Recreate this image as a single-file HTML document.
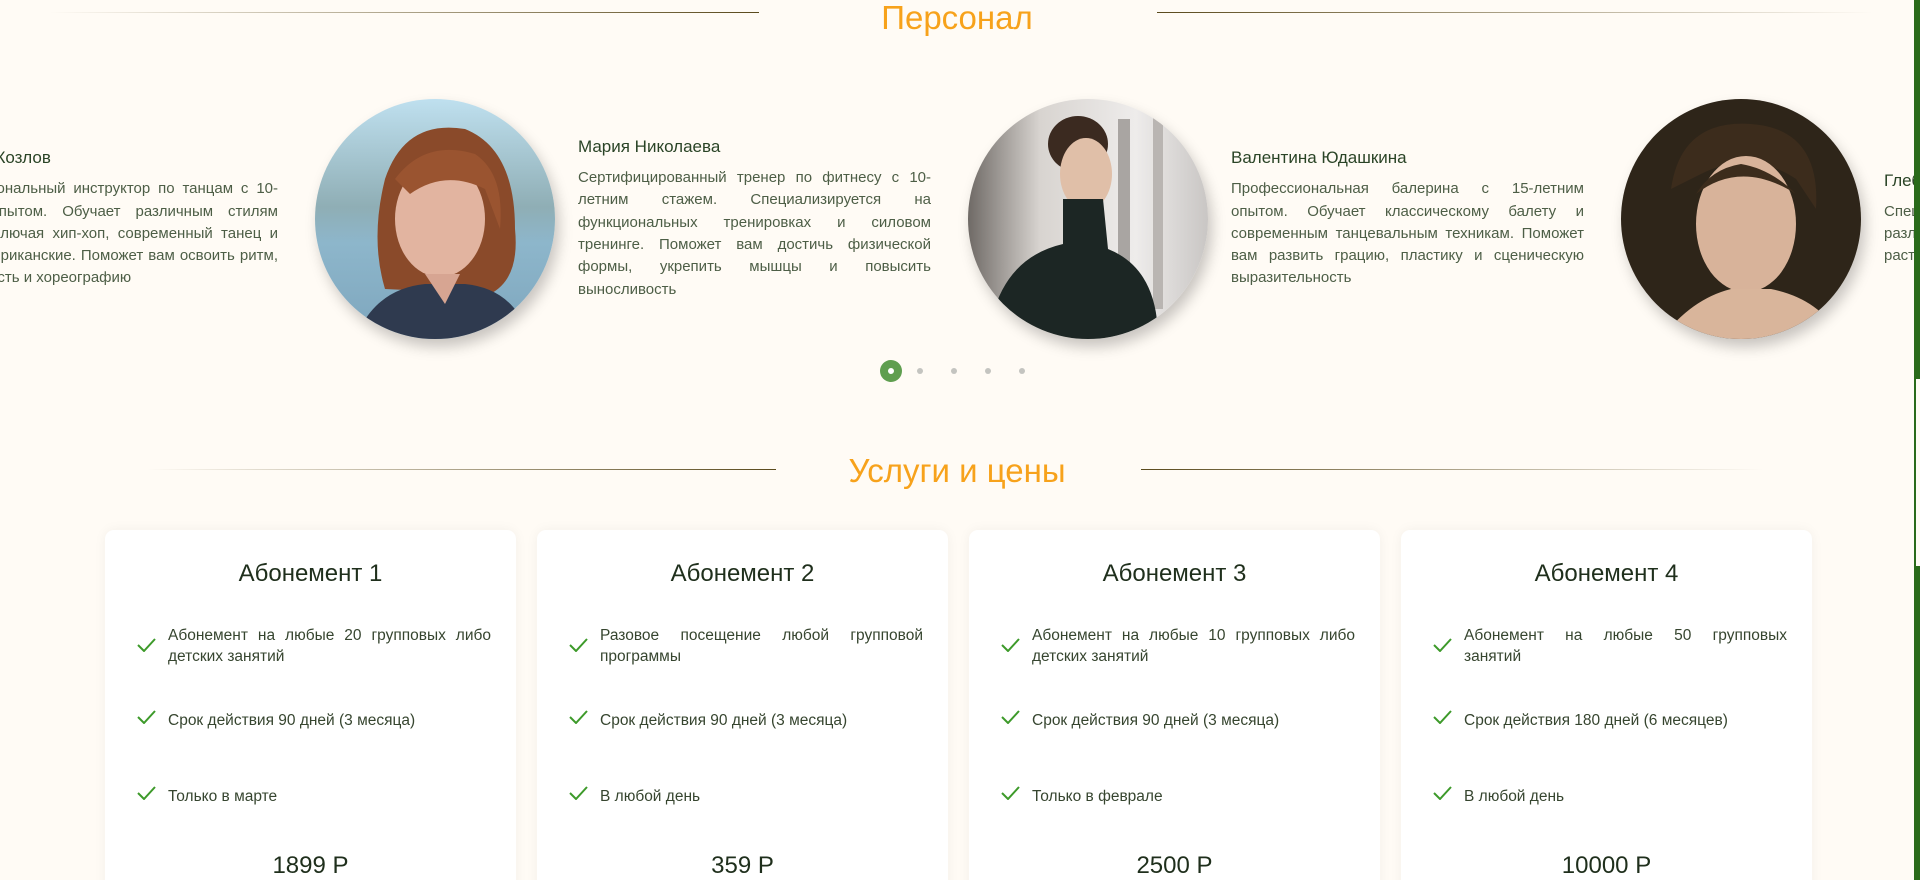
<!DOCTYPE html>
<html><head><meta charset="utf-8"><style>
*{margin:0;padding:0;box-sizing:border-box}
html,body{width:1920px;height:880px;overflow:hidden;background:#fffbf5;font-family:"Liberation Sans",sans-serif;color:#2f4a2a}
#wrap{position:absolute;left:0;top:0;width:1920px;height:880px;overflow:hidden}
.abs{position:absolute}
.title{position:absolute;left:0;width:1914px;text-align:center;color:#f7a21b;font-size:33px}
.line{position:absolute;height:1px}
.l{background:linear-gradient(90deg,rgba(120,100,50,0),#5a4a1c)}
.r{background:linear-gradient(90deg,#5a4a1c,rgba(120,100,50,0))}
.ph{position:absolute;top:99px;width:240px;height:240px;border-radius:50%;overflow:hidden;box-shadow:4px 8px 14px rgba(0,0,0,.22)}
.txt{position:absolute;width:353px;display:flex;flex-direction:column;justify-content:center;top:119px;height:200px}
.txt h4{font-weight:normal;font-size:17px;color:#2a4426;margin-bottom:10px}
.txt p{font-size:15px;line-height:22.3px;text-align:justify;color:#4d5e46}
.dot{position:absolute;width:6px;height:6px;border-radius:50%;background:#c4c4c0;top:368px}
.card{position:absolute;top:530px;width:411px;height:400px;background:#fff;border-radius:9px;box-shadow:0 0 12px rgba(0,0,0,.05)}
.card h3{position:absolute;top:30px;width:100%;text-align:center;font-weight:normal;font-size:24px;color:#1f2f1c}
.it{position:absolute;left:63px;width:323px;font-size:15.5px;line-height:21px;text-align:justify;color:#36452f}
.ck{position:absolute;left:-31px;width:19px;height:14px}
.price{position:absolute;top:322px;width:100%;text-align:center;font-size:24px;color:#1f2f1c}
</style></head><body><div id="wrap">
<div class="title" style="top:-1px">Персонал</div>
<div class="line l" style="left:49px;width:710px;top:12px"></div>
<div class="line r" style="left:1157px;width:716px;top:12px"></div>

<div class="txt" style="left:-75px"><h4>Алексей Козлов</h4><p>Профессиональный инструктор по танцам с 10-летним опытом. Обучает различным стилям танцев, включая хип-хоп, современный танец и латиноамериканские. Поможет вам освоить ритм, пластичность и хореографию</p></div>

<div class="ph" style="left:315px"><svg width="240" height="240"><defs><linearGradient id="b1" x1="0" y1="0" x2="0" y2="1"><stop offset="0" stop-color="#bfe0ef"/><stop offset=".45" stop-color="#8faeb5"/><stop offset=".6" stop-color="#8db6cb"/><stop offset="1" stop-color="#7ea6bd"/></linearGradient></defs><rect width="240" height="240" fill="url(#b1)"/><path d="M70 80 Q90 20 150 30 Q200 50 200 130 Q205 180 175 195 L70 190 Q55 140 70 80Z" fill="#8a4a2a"/><ellipse cx="125" cy="120" rx="45" ry="58" fill="#e2b4a0"/><path d="M80 80 Q110 40 160 55 Q190 75 185 130 L170 90 Q130 70 95 95Z" fill="#9a5430"/><path d="M40 240 Q60 190 110 185 L150 185 Q200 190 215 240Z" fill="#2f3a4f"/><path d="M110 175 L145 175 L130 205Z" fill="#d7a592"/></svg></div>
<div class="txt" style="left:578px"><h4>Мария Николаева</h4><p>Сертифицированный тренер по фитнесу с 10-летним стажем. Специализируется на функциональных тренировках и силовом тренинге. Поможет вам достичь физической формы, укрепить мышцы и повысить выносливость</p></div>

<div class="ph" style="left:968px"><svg width="240" height="240"><defs><linearGradient id="b2" x1="0" y1="0" x2="1" y2="0"><stop offset="0" stop-color="#6f6a66"/><stop offset=".3" stop-color="#d8d4d0"/><stop offset=".7" stop-color="#eeeceb"/><stop offset="1" stop-color="#c9c6c4"/></linearGradient></defs><rect width="240" height="240" fill="url(#b2)"/><rect x="150" y="20" width="12" height="180" fill="#a9a5a2"/><rect x="185" y="10" width="10" height="200" fill="#b9b5b2"/><ellipse cx="110" cy="45" rx="30" ry="28" fill="#3b2a20"/><ellipse cx="118" cy="75" rx="26" ry="36" fill="#e0bfa8"/><path d="M95 100 L135 100 L140 150 Q190 170 190 240 L20 240 Q30 160 95 145Z" fill="#1c2624"/></svg></div>
<div class="txt" style="left:1231px"><h4>Валентина Юдашкина</h4><p>Профессиональная балерина с 15-летним опытом. Обучает классическому балету и современным танцевальным техникам. Поможет вам развить грацию, пластику и сценическую выразительность</p></div>

<div class="ph" style="left:1621px"><svg width="240" height="240"><rect width="240" height="240" fill="#2e2519"/><path d="M50 90 Q60 20 130 25 Q200 30 195 110 L175 80 Q130 50 80 75Z" fill="#3c2c1c"/><ellipse cx="125" cy="125" rx="50" ry="68" fill="#d8b39a"/><path d="M40 240 Q70 200 110 190 L150 190 Q200 200 220 240Z" fill="#d9b59b"/><path d="M75 95 Q120 60 175 95 Q150 70 120 65 Q90 70 75 95Z" fill="#3c2c1c"/></svg></div>
<div class="txt" style="left:1884px;width:30px;overflow:hidden"><div style="width:353px"><h4 style="font-weight:normal;font-size:17px;color:#2a4426;margin-bottom:10px">Глеб Иванов</h4><p>Специалист по растяжке. Облада­ет знаниями различных техник. Поможет вам правильно растянуться и улучшить гибкость тела</p></div></div>

<div class="abs" style="left:880px;top:360px;width:22px;height:22px;border-radius:50%;background:#5f9e4f"></div>
<div class="abs" style="left:888px;top:368px;width:6px;height:6px;border-radius:50%;background:#fff"></div>
<div class="dot" style="left:917px"></div><div class="dot" style="left:951px"></div><div class="dot" style="left:985px"></div><div class="dot" style="left:1019px"></div>

<div class="title" style="top:452px">Услуги и цены</div>
<div class="line l" style="left:147px;width:629px;top:469px"></div>
<div class="line r" style="left:1141px;width:622px;top:469px"></div>

<svg width="0" height="0" style="position:absolute"><defs><symbol id="ck" viewBox="0 0 19 14"><path d="M1 7 L7 13 L18 1" fill="none" stroke="#3d9a2a" stroke-width="2"/></symbol></defs></svg>

<div class="card" style="left:105px"><h3>Абонемент 1</h3>
<div class="it" style="top:95px"><svg class="ck" style="top:13px"><use href="#ck"/></svg>Абонемент на любые 20 групповых либо детских занятий</div>
<div class="it" style="top:180px"><svg class="ck" style="top:0"><use href="#ck"/></svg>Срок действия 90 дней (3 месяца)</div>
<div class="it" style="top:256px"><svg class="ck" style="top:0"><use href="#ck"/></svg>Только в марте</div>
<div class="price">1899 Р</div></div>

<div class="card" style="left:537px"><h3>Абонемент 2</h3>
<div class="it" style="top:95px"><svg class="ck" style="top:13px"><use href="#ck"/></svg>Разовое посещение любой групповой программы</div>
<div class="it" style="top:180px"><svg class="ck" style="top:0"><use href="#ck"/></svg>Срок действия 90 дней (3 месяца)</div>
<div class="it" style="top:256px"><svg class="ck" style="top:0"><use href="#ck"/></svg>В любой день</div>
<div class="price">359 Р</div></div>

<div class="card" style="left:969px"><h3>Абонемент 3</h3>
<div class="it" style="top:95px"><svg class="ck" style="top:13px"><use href="#ck"/></svg>Абонемент на любые 10 групповых либо детских занятий</div>
<div class="it" style="top:180px"><svg class="ck" style="top:0"><use href="#ck"/></svg>Срок действия 90 дней (3 месяца)</div>
<div class="it" style="top:256px"><svg class="ck" style="top:0"><use href="#ck"/></svg>Только в феврале</div>
<div class="price">2500 Р</div></div>

<div class="card" style="left:1401px"><h3>Абонемент 4</h3>
<div class="it" style="top:95px"><svg class="ck" style="top:13px"><use href="#ck"/></svg><span style="display:block;text-align-last:justify">Абонемент на любые 50 групповых</span>занятий</div>
<div class="it" style="top:180px"><svg class="ck" style="top:0"><use href="#ck"/></svg>Срок действия 180 дней (6 месяцев)</div>
<div class="it" style="top:256px"><svg class="ck" style="top:0"><use href="#ck"/></svg>В любой день</div>
<div class="price">10000 Р</div></div>

<div class="abs" style="left:1914px;top:0;width:6px;height:880px;background:#2a6a1a"></div>
<div class="abs" style="left:1916px;top:379px;width:4px;height:187px;background:#fffbf5"></div>
</div></body></html>
